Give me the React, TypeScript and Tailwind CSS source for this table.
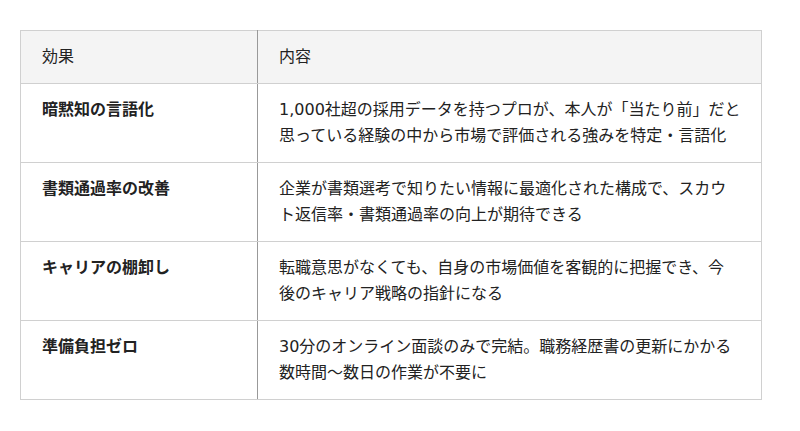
const rows = [
  {
    effect: "暗黙知の言語化",
    lines: [
      "1,000社超の採用データを持つプロが、本人が「当たり前」だと",
      "思っている経験の中から市場で評価される強みを特定・言語化",
    ],
  },
  {
    effect: "書類通過率の改善",
    lines: [
      "企業が書類選考で知りたい情報に最適化された構成で、スカウ",
      "ト返信率・書類通過率の向上が期待できる",
    ],
  },
  {
    effect: "キャリアの棚卸し",
    lines: [
      "転職意思がなくても、自身の市場価値を客観的に把握でき、今",
      "後のキャリア戦略の指針になる",
    ],
  },
  {
    effect: "準備負担ゼロ",
    lines: [
      "30分のオンライン面談のみで完結。職務経歴書の更新にかかる",
      "数時間〜数日の作業が不要に",
    ],
  },
];

export default function App() {
  return (
    <div
      className="w-[800px] h-[431px] bg-white pt-[30px] pl-5 text-[#222]"
      style={{ fontFamily: '"DejaVu Sans", "Noto Sans CJK JP", sans-serif' }}
    >
      <table className="w-[742px] border-collapse text-[16px] leading-[26px]">
        <thead>
          <tr className="bg-[#f4f4f4]">
            <th className="w-[237px] border border-[#d0d0d0] border-r-[#999] px-[21px] py-[13px] text-left font-normal">
              効果
            </th>
            <th className="border border-[#d0d0d0] border-l-[#999] pl-[21px] pr-[15px] py-[13px] text-left font-normal">
              内容
            </th>
          </tr>
        </thead>
        <tbody>
          {rows.map((r) => (
            <tr key={r.effect}>
              <td className="h-[79px] border border-[#d0d0d0] border-r-[#999] px-[21px] py-[13px] align-top font-bold">
                {r.effect}
              </td>
              <td className="border border-[#d0d0d0] border-l-[#999] pl-[21px] pr-[15px] py-[13px] align-top whitespace-nowrap">
                {r.lines.map((l, i) => (
                  <div key={i}>{l}</div>
                ))}
              </td>
            </tr>
          ))}
        </tbody>
      </table>
    </div>
  );
}
